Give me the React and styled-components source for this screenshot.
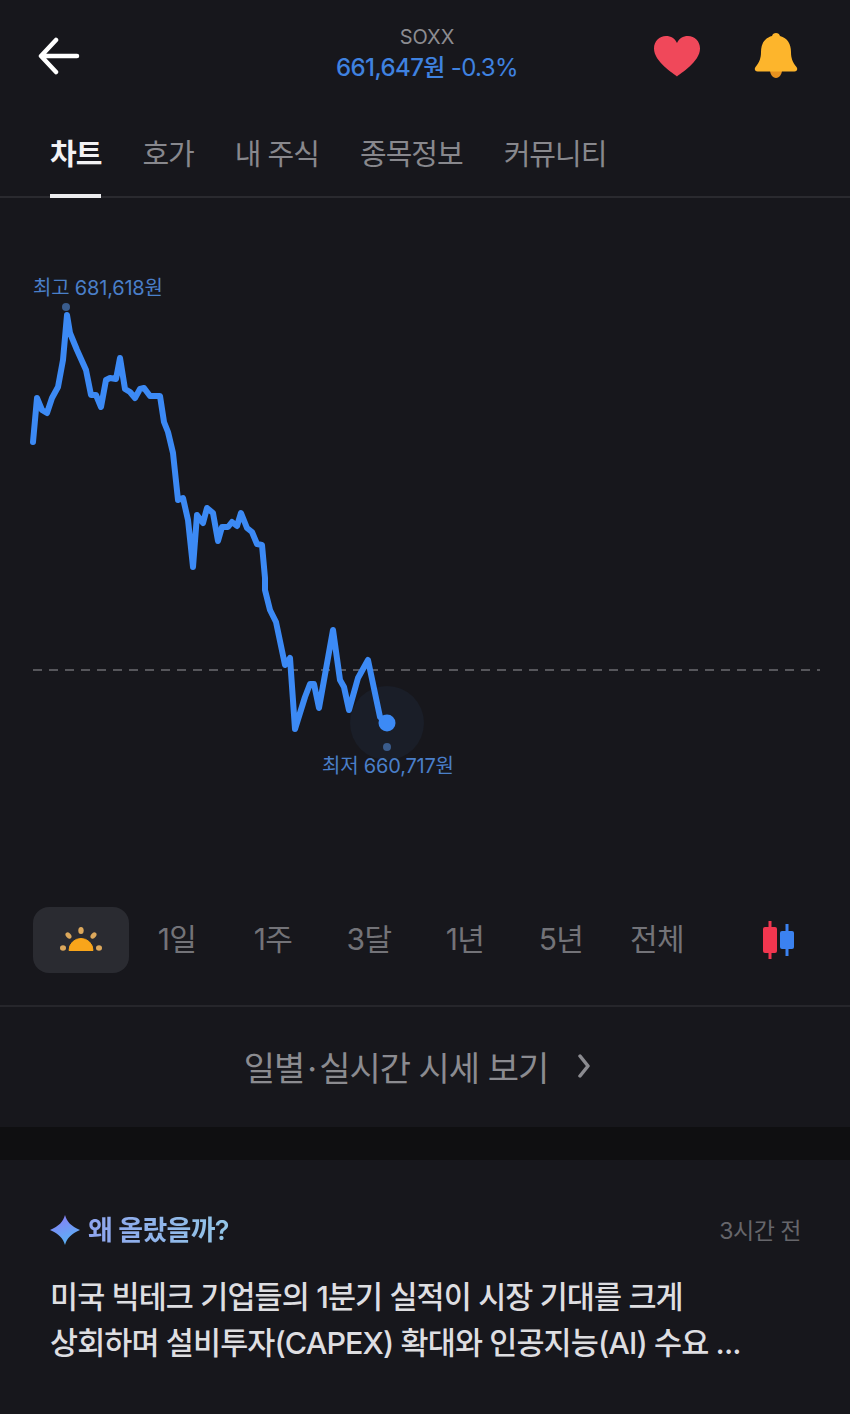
import React from 'react';
import styled, { createGlobalStyle } from 'styled-components';

const GlobalStyle = createGlobalStyle`
  html, body {
    margin: 0;
    padding: 0;
    background: #17171c;
  }
  * {
    box-sizing: border-box;
  }
`;

const Page = styled.div`
  width: 850px;
  height: 1414px;
  overflow: hidden;
  background: #17171c;
  font-family: Inter, "Noto Sans CJK KR", sans-serif;
`;

const Header = styled.header`
  height: 122px;
  padding: 23px 52px 0 38px;
  display: flex;
  justify-content: space-between;
  align-items: flex-start;
`;

const BackButton = styled.div`
  width: 46px;
  height: 66px;
  display: flex;
  align-items: center;
`;

const Ticker = styled.div`
  flex: 1;
  display: flex;
  flex-direction: column;
  align-items: center;
  padding-left: 117px;
`;

const Symbol = styled.span`
  font-size: 20px;
  line-height: 28px;
  color: #8c8c91;
`;

const Price = styled.span`
  font-size: 24px;
  line-height: 33px;
  font-weight: 500;
  letter-spacing: -0.6px;
  color: #3f82e0;
`;

const ChangeRate = styled.span`
  font-weight: 400;
  margin-left: 6px;
`;

const Actions = styled.div`
  display: flex;
  align-items: center;
  gap: 53px;
  padding-top: 10px;
`;

const Tabs = styled.nav`
  height: 76px;
  padding: 0 50px;
  display: flex;
  gap: 41px;
  border-bottom: 2px solid #2a2a2f;
`;

const Tab = styled.div`
  height: 76px;
  padding-top: 11px;
  font-size: 29px;
  line-height: 44px;
  letter-spacing: -1px;
  white-space: nowrap;
  font-weight: ${(p) => (p.$active ? 600 : 400)};
  color: ${(p) => (p.$active ? '#f2f2f4' : '#88888d')};
  border-bottom: ${(p) => (p.$active ? '4px solid #ececee' : '4px solid transparent')};
`;

const ChartArea = styled.section`
  position: relative;
  height: 708px;
`;

const ChartSvg = styled.svg`
  display: block;
`;

const ChartLabel = styled.span`
  position: absolute;
  left: ${(p) => p.$x}px;
  top: ${(p) => p.$y}px;
  font-size: 20px;
  line-height: 26px;
  letter-spacing: -0.2px;
  white-space: nowrap;
  color: #4a7fc9;
`;

const RangeRow = styled.div`
  height: 101px;
  padding: 1px 33px 0;
  display: flex;
  align-items: flex-start;
  border-bottom: 2px solid #26262b;
`;

const RangeItem = styled.div`
  width: 96px;
  height: 66px;
  padding-bottom: ${(p) => (p.$active ? 0 : 7)}px;
  display: flex;
  align-items: center;
  justify-content: center;
  border-radius: 16px;
  font-size: 30px;
  letter-spacing: -0.6px;
  color: #737378;
  background: ${(p) => (p.$active ? '#2a2b31' : 'transparent')};
`;

const CandleToggle = styled.div`
  margin-left: auto;
  width: 55px;
  height: 66px;
  padding-right: 22px;
  display: flex;
  align-items: center;
`;

const DetailLink = styled.div`
  height: 120px;
  padding: 0 16px 2px 0;
  display: flex;
  align-items: center;
  justify-content: center;
  gap: 30px;
  font-size: 34px;
  letter-spacing: -1px;
  color: #8b8b90;
`;

const MiddleDot = styled.span`
  margin: 0 3px;
`;

const SectionGap = styled.div`
  height: 33px;
  background: #0f0f11;
`;

const Insight = styled.article`
  padding: 50px 49px 0 50px;
`;

const InsightHead = styled.div`
  height: 40px;
  display: flex;
  align-items: center;
`;

const InsightTag = styled.span`
  margin-left: 8px;
  padding-bottom: 3px;
  font-size: 27px;
  font-weight: 600;
  letter-spacing: -0.7px;
  background: linear-gradient(90deg, #8ea4ee, #93c6e6);
  -webkit-background-clip: text;
  background-clip: text;
  color: transparent;
`;

const InsightTime = styled.span`
  margin-left: auto;
  padding-bottom: 2px;
  font-size: 23px;
  letter-spacing: -0.5px;
  color: #66666b;
`;

const InsightBody = styled.p`
  margin: 24px 0 0;
  font-size: 30.5px;
  line-height: 46px;
  letter-spacing: -0.9px;
  font-weight: 500;
  color: #dedee1;
  white-space: nowrap;
`;

const points = [
  [33, 442], [37, 398], [42, 410], [47, 413], [52, 398], [58, 387], [63, 360], [67, 315],
  [70, 333], [77, 350], [86, 370], [91, 395], [96, 395], [101, 407], [106, 380], [110, 378],
  [116, 379], [120, 358], [125, 389], [130, 392], [135, 398], [140, 389], [144, 388], [150, 396],
  [160, 396], [164, 422], [168, 432], [173, 453], [178, 500], [183, 498], [188, 520], [193, 567],
  [197, 515], [203, 523], [207, 508], [213, 513], [218, 541], [222, 527], [228, 527], [232, 522],
  [237, 526], [241, 513], [247, 528], [252, 532], [257, 544], [262, 545], [265, 578], [265, 590],
  [270, 610], [276, 622], [285, 665], [290, 658], [295, 729], [305, 697], [310, 684], [314, 684],
  [319, 708], [333, 630], [340, 680], [344, 687], [349, 710], [358, 678], [368, 660], [380, 717],
  [387, 723],
];

// chart area starts at y=198 on the page
const linePoints = points.map(([x, y]) => `${x},${y - 198}`).join(' ');

const BackIcon = () => (
  <svg width="42" height="38" viewBox="0 0 42 38" fill="none" stroke="#fff" strokeWidth="4.500" strokeLinecap="round" strokeLinejoin="round">
    <path d="M39 19H4M18 3L3 19l15 16" />
  </svg>
);

const HeartIcon = () => (
  <svg width="48" height="42" viewBox="0 0 48 42">
    <path d="M24 41.500C21 38.500 1 27 1 13.500 1 6 6.500 1 13 1c5 0 9 2.500 11 7 2-4.500 6-7 11-7 6.500 0 12 5 12 12.500C47 27 27 38.500 24 41.500z" fill="#f0485a" />
  </svg>
);

const BellIcon = () => (
  <svg width="44" height="46" viewBox="0 0 44 46">
    <path d="M16 37h12c0 4-2.500 8-6 8s-6-4-6-8z" fill="#e8921f" />
    <path d="M22 0c2 0 3.500 1.200 4 3C33.500 5 37 11 37 19c0 6 1.500 10 5.500 15 1.500 2 .5 4.500-2 4.500H3.500c-2.500 0-3.500-2.500-2-4.500C5.500 29 7 25 7 19 7 11 10.500 5 18 3c.5-1.800 2-3 4-3z" fill="#fdb52c" />
  </svg>
);

const SunIcon = () => (
  <svg width="42" height="26" viewBox="0 0 42 26">
    <path d="M9 23.500a12 12 0 0 1 24 0z" fill="#f9a51a" stroke="#f9a51a" strokeWidth="1" strokeLinejoin="round" />
    <g fill="#dca85c">
      <ellipse cx="21" cy="3.500" rx="2.700" ry="3.500" />
      <ellipse cx="8.500" cy="8.500" rx="2.500" ry="3.500" transform="rotate(-40 8.500 8.500)" />
      <ellipse cx="33.500" cy="8.500" rx="2.500" ry="3.500" transform="rotate(40 33.500 8.500)" />
      <ellipse cx="3" cy="21" rx="3" ry="2.700" />
      <ellipse cx="39" cy="21" rx="3" ry="2.700" />
    </g>
  </svg>
);

const CandleIcon = () => (
  <svg width="33" height="38" viewBox="0 0 33 38" style={{ flexShrink: 0 }}>
    <path d="M8 0v38" stroke="#f0364f" strokeWidth="3" />
    <rect x="1" y="6" width="14" height="26" rx="2" fill="#f0364f" />
    <path d="M25 3v32" stroke="#3b82f0" strokeWidth="3" />
    <rect x="18" y="10" width="14" height="18" rx="2" fill="#3b82f0" />
  </svg>
);

const ChevronIcon = () => (
  <svg width="12" height="26" viewBox="0 0 12 26" fill="none" stroke="#8b8b90" strokeWidth="3.500" strokeLinecap="round" strokeLinejoin="round">
    <path d="M2 3l8 10-8 10" />
  </svg>
);

const SparkleIcon = () => (
  <svg width="30" height="30" viewBox="0 0 30 30">
    <defs>
      <linearGradient id="sparkle" x1="0.200" y1="0" x2="0.600" y2="1">
        <stop offset="0" stopColor="#8a7cf5" />
        <stop offset="1" stopColor="#58b4f5" />
      </linearGradient>
    </defs>
    <path d="M15 0c2 7 6 11 15 15-9 4-13 8-15 15-2-7-6-11-15-15 9-4 13-8 15-15z" fill="url(#sparkle)" />
  </svg>
);

const tabs = ['차트', '호가', '내 주식', '종목정보', '커뮤니티'];
const ranges = ['1일', '1주', '3달', '1년', '5년', '전체'];

export default function App() {
  return (
    <Page>
      <GlobalStyle />
      <Header>
        <BackButton><BackIcon /></BackButton>
        <Ticker>
          <Symbol>SOXX</Symbol>
          <Price>661,647원<ChangeRate>-0.3%</ChangeRate></Price>
        </Ticker>
        <Actions>
          <HeartIcon />
          <BellIcon />
        </Actions>
      </Header>

      <Tabs>
        {tabs.map((tab, i) => (
          <Tab key={tab} $active={i === 0}>{tab}</Tab>
        ))}
      </Tabs>

      <ChartArea>
        <ChartSvg width="850" height="708" viewBox="0 0 850 708">
          <line x1="33" y1="472" x2="820" y2="472" stroke="#56565b" strokeWidth="2" strokeDasharray="9 7" />
          <circle cx="387" cy="525" r="37" fill="#1a1e28" />
          <circle cx="66" cy="109" r="4" fill="#3a5c8c" />
          <circle cx="387" cy="549" r="4" fill="#3a5c8c" />
          <polyline points={linePoints} fill="none" stroke="#3c8af5" strokeWidth="6" strokeLinejoin="round" strokeLinecap="round" />
          <circle cx="387" cy="525" r="8.500" fill="#3c8af5" />
        </ChartSvg>
        <ChartLabel $x={33} $y={77}>최고 681,618원</ChartLabel>
        <ChartLabel $x={322} $y={555}>최저 660,717원</ChartLabel>
      </ChartArea>

      <RangeRow>
        <RangeItem $active><SunIcon /></RangeItem>
        {ranges.map((range) => (
          <RangeItem key={range}>{range}</RangeItem>
        ))}
        <CandleToggle><CandleIcon /></CandleToggle>
      </RangeRow>

      <DetailLink>
        <span>일별<MiddleDot>·</MiddleDot>실시간 시세 보기</span>
        <ChevronIcon />
      </DetailLink>

      <SectionGap />

      <Insight>
        <InsightHead>
          <SparkleIcon />
          <InsightTag>왜 올랐을까?</InsightTag>
          <InsightTime>3시간 전</InsightTime>
        </InsightHead>
        <InsightBody>
          미국 빅테크 기업들의 1분기 실적이 시장 기대를 크게<br />
          상회하며 설비투자(CAPEX) 확대와 인공지능(AI) 수요 ...
        </InsightBody>
      </Insight>
    </Page>
  );
}
